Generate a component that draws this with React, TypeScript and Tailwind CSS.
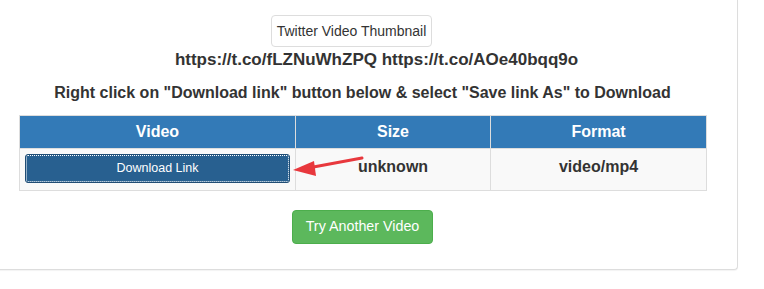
const rows = [{ size: "unknown", format: "video/mp4" }];

const Arrow = () => (
  <svg
    className="absolute left-[290px] top-[152px] pointer-events-none"
    width="80"
    height="30"
    viewBox="0 0 80 30"
  >
    <line x1="72" y1="6" x2="18" y2="16" stroke="#e8383d" strokeWidth="3" strokeLinecap="round" />
    <polygon points="3,18 24,9 26,24" fill="#e8383d" />
  </svg>
);

export default function App() {
  return (
    <div
      className="relative h-[289px] w-[764px] overflow-hidden bg-white"
      style={{ fontFamily: '"Liberation Sans", Arial, sans-serif' }}
    >
      <div className="ml-[-20px] w-[758px] rounded-br-[4px] border border-[#dddddd] border-t-0 bg-white pb-[25px] pl-[38px] pr-[31px] pt-[15px] shadow-[0_1px_1px_rgba(0,0,0,0.05)]">
        <div className="flex flex-col items-center text-[#333333]">
          <div className="mr-[22px] flex h-[32px] items-center rounded-[4px] border border-[#dddddd] px-[5px] text-[14px]">
            Twitter Video Thumbnail
          </div>
          <p className="ml-[28px] mt-[3px] text-[17px] font-bold leading-[20px]">
            https://t.co/fLZNuWhZPQ https://t.co/AOe40bqq9o
          </p>
          <p className="mt-[13px] text-[16px] font-bold leading-[20px]">
            Right click on "Download link" button below &amp; select "Save link As" to Download
          </p>
        </div>
        <table className="mt-[12px] w-[688px] border-collapse text-[16px]">
          <thead>
            <tr className="bg-[#337ab7] text-white">
              <th className="h-[33px] w-[276px] border border-[#dddddd] font-bold">Video</th>
              <th className="h-[33px] w-[195px] border border-[#dddddd] font-bold">Size</th>
              <th className="h-[33px] border border-[#dddddd] font-bold">Format</th>
            </tr>
          </thead>
          <tbody>
            {rows.map((r) => (
              <tr key={r.format} className="bg-[#f9f9f9] text-[#333333]">
                <td className="h-[42px] border border-[#dddddd] px-[5px] align-top pt-[5px]">
                  <button className="flex h-[29px] w-full items-center justify-center rounded-[3px] border border-[#204d74] bg-[#286090] text-[12.5px] text-white outline-1 outline-dotted outline-white -outline-offset-2">
                    Download Link
                  </button>
                </td>
                <td className="border border-[#dddddd] text-center align-top pt-[6px] font-bold">{r.size}</td>
                <td className="border border-[#dddddd] text-center align-top pt-[6px] font-bold">{r.format}</td>
              </tr>
            ))}
          </tbody>
        </table>
        <div className="mt-[19px] flex justify-center">
          <button className="h-[34px] rounded-[4px] border border-[#4cae4c] bg-[#5cb85c] px-[13px] text-[14.3px] text-white">
            Try Another Video
          </button>
        </div>
      </div>
      <Arrow />
    </div>
  );
}
